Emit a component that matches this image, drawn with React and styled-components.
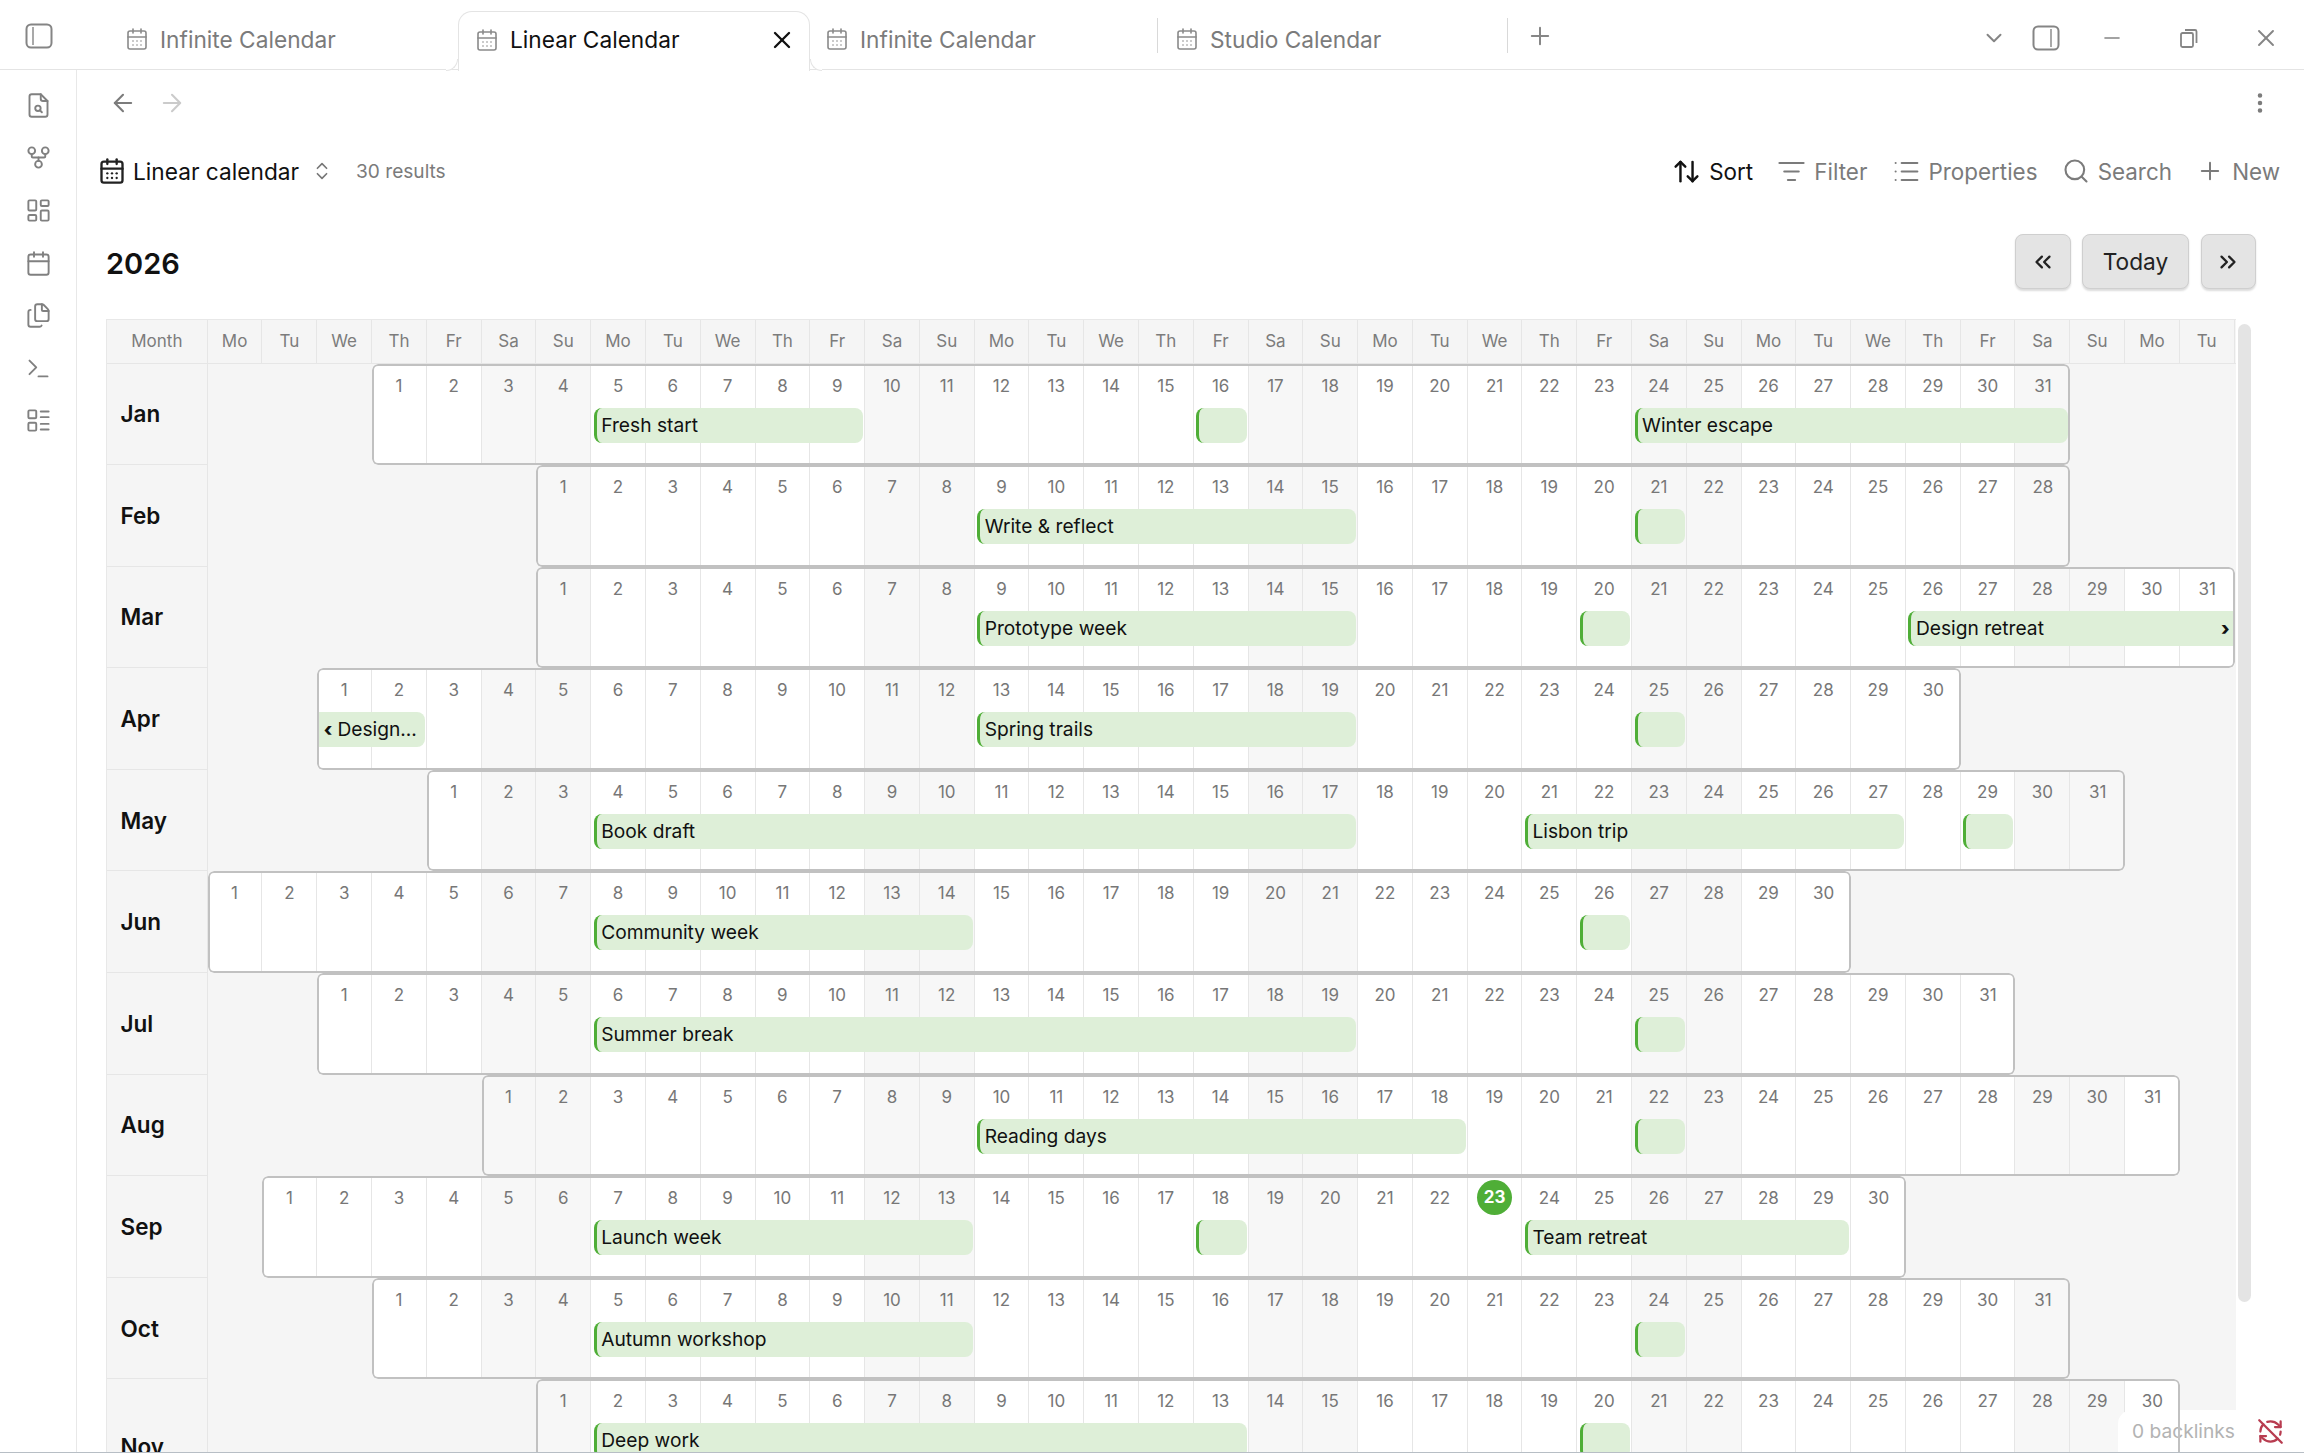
import React from 'react';
import styled, { createGlobalStyle } from 'styled-components';
import {
  ArrowLeft,
  ArrowRight,
  ArrowUpDown,
  Calendar,
  CalendarDays,
  ChevronDown,
  ChevronsLeft,
  ChevronsRight,
  ChevronsUpDown,
  EllipsisVertical,
  Files,
  GitFork,
  LayoutDashboard,
  LayoutList,
  List,
  ListFilter,
  Minus,
  Plus,
  RefreshCwOff,
  Search,
  Terminal,
  X,
} from 'lucide-react';

const GlobalStyle = createGlobalStyle`
  html, body {
    margin: 0;
    padding: 0;
    overflow: hidden;
    background: #fff;
  }
  body {
    font-family: Inter, "Liberation Sans", sans-serif;
  }
`;

const DAY_NAMES = ['Mo', 'Tu', 'We', 'Th', 'Fr', 'Sa', 'Su'];
const TODAY = { month: 'Sep', day: 23 };

const months = [
  {
    name: 'Jan',
    offset: 3,
    days: 31,
    events: [
      { from: 5, to: 9, label: 'Fresh start' },
      { from: 16, to: 16 },
      { from: 24, to: 31, label: 'Winter escape' },
    ],
  },
  {
    name: 'Feb',
    offset: 6,
    days: 28,
    events: [
      { from: 9, to: 15, label: 'Write & reflect' },
      { from: 21, to: 21 },
    ],
  },
  {
    name: 'Mar',
    offset: 6,
    days: 31,
    events: [
      { from: 9, to: 15, label: 'Prototype week' },
      { from: 20, to: 20 },
      { from: 26, to: 31, label: 'Design retreat', continues: 'right' },
    ],
  },
  {
    name: 'Apr',
    offset: 2,
    days: 30,
    events: [
      { from: 1, to: 2, label: 'Design...', continues: 'left' },
      { from: 13, to: 19, label: 'Spring trails' },
      { from: 25, to: 25 },
    ],
  },
  {
    name: 'May',
    offset: 4,
    days: 31,
    events: [
      { from: 4, to: 17, label: 'Book draft' },
      { from: 21, to: 27, label: 'Lisbon trip' },
      { from: 29, to: 29 },
    ],
  },
  {
    name: 'Jun',
    offset: 0,
    days: 30,
    events: [
      { from: 8, to: 14, label: 'Community week' },
      { from: 26, to: 26 },
    ],
  },
  {
    name: 'Jul',
    offset: 2,
    days: 31,
    events: [
      { from: 6, to: 19, label: 'Summer break' },
      { from: 25, to: 25 },
    ],
  },
  {
    name: 'Aug',
    offset: 5,
    days: 31,
    events: [
      { from: 10, to: 18, label: 'Reading days' },
      { from: 22, to: 22 },
    ],
  },
  {
    name: 'Sep',
    offset: 1,
    days: 30,
    events: [
      { from: 7, to: 13, label: 'Launch week' },
      { from: 18, to: 18 },
      { from: 24, to: 29, label: 'Team retreat' },
    ],
  },
  {
    name: 'Oct',
    offset: 3,
    days: 31,
    events: [
      { from: 5, to: 11, label: 'Autumn workshop' },
      { from: 24, to: 24 },
    ],
  },
  {
    name: 'Nov',
    offset: 6,
    days: 30,
    tall: true,
    events: [
      { from: 2, to: 13, label: 'Deep work' },
      { from: 20, to: 20 },
    ],
  },
];

const Window = styled.div`
  width: 2304px;
  height: 1453px;
  box-sizing: border-box;
  border-bottom: 1px solid #b7bec5;
  display: flex;
  flex-direction: column;
  overflow: hidden;
  background: #fff;
`;

const TabBar = styled.header`
  height: 70px;
  flex: none;
  box-sizing: border-box;
  display: flex;
  align-items: flex-end;
  border-bottom: 1.5px solid #e4e4e4;
`;

const SidebarToggle = styled.button`
  width: 108px;
  height: 60px;
  flex: none;
  padding: 0 0 6px 25px;
  box-sizing: border-box;
  border: 0;
  background: none;
  display: flex;
  align-items: center;
  svg {
    display: block;
  }
`;

const Tab = styled.div`
  position: relative;
  width: ${p => (p.$active ? '352px' : '350px')};
  height: ${p => (p.$active ? '60px' : '58px')};
  flex: none;
  box-sizing: border-box;
  margin-bottom: ${p => (p.$active ? '-1.5px' : '0')};
  margin-right: ${p => (p.$active ? '-2px' : '0')};
  padding: 0 13px ${p => (p.$active ? '3px' : '2px')} ${p => (p.$active ? '16px' : '17px')};
  display: flex;
  align-items: center;
  gap: 11px;
  font-size: 22.7px;
  color: ${p => (p.$active ? '#111' : '#7b7b7b')};
  background: #fff;
  ${p =>
    p.$active &&
    `
    border: 1.5px solid #e4e4e4;
    border-bottom: 0;
    border-radius: 14px 14px 0 0;
    z-index: 1;
    &::before, &::after {
      content: '';
      position: absolute;
      bottom: 0;
      width: 12px;
      height: 12px;
      box-sizing: border-box;
      border-bottom: 1.5px solid #e4e4e4;
      background: #fff;
    }
    &::before {
      left: -13px;
      border-right: 1.5px solid #e4e4e4;
      border-bottom-right-radius: 12px;
    }
    &::after {
      right: -13px;
      border-left: 1.5px solid #e4e4e4;
      border-bottom-left-radius: 12px;
    }
  `}
  ${p =>
    p.$divider &&
    `
    &::after {
      content: '';
      position: absolute;
      right: 0;
      top: 7px;
      height: 35px;
      width: 1px;
      background: #d9d9d9;
    }
  `}
`;

const TabTitle = styled.span`
  flex: 1;
  white-space: nowrap;
`;

const TabIcon = styled(CalendarDays)`
  flex: none;
  color: #8a8a8a;
`;

const AddTab = styled.button`
  width: 64px;
  height: 58px;
  flex: none;
  padding: 0 0 8px;
  box-sizing: border-box;
  border: 0;
  background: none;
  color: #868686;
  display: flex;
  align-items: center;
  justify-content: center;
`;

const TitleActions = styled.div`
  margin-left: auto;
  height: 58px;
  display: flex;
  align-items: center;
  color: #858585;
`;

const TitleAction = styled.button`
  width: ${p => p.$w}px;
  margin-right: ${p => p.$mr || 0}px;
  height: 58px;
  flex: none;
  padding: 0 0 4px;
  box-sizing: border-box;
  border: 0;
  background: none;
  color: inherit;
  display: flex;
  align-items: center;
  justify-content: center;
`;

const Body = styled.div`
  flex: 1;
  min-height: 0;
  display: flex;
`;

const Sidebar = styled.nav`
  width: 77px;
  flex: none;
  box-sizing: border-box;
  padding-top: 9px;
  border-right: 1.5px solid #e8e8e8;
  display: flex;
  flex-direction: column;
  align-items: center;
  color: #808080;
`;

const SideItem = styled.div`
  height: 52.6px;
  flex: none;
  display: flex;
  align-items: center;
  justify-content: center;
`;

const Main = styled.main`
  position: relative;
  flex: 1;
  min-width: 0;
  overflow: hidden;
  display: flex;
  flex-direction: column;
`;

const NavBar = styled.div`
  height: 66px;
  flex: none;
  box-sizing: border-box;
  padding: 0 31px 0 32px;
  display: flex;
  align-items: center;
  gap: 21px;
  color: #7c7c7c;
`;

const NavSpacer = styled.div`
  flex: 1;
`;

const ForwardArrow = styled(ArrowRight)`
  color: #cbcbcb;
`;

const Toolbar = styled.div`
  height: 70px;
  flex: none;
  box-sizing: border-box;
  padding: 0 24px 0 21px;
  display: flex;
  align-items: center;
  justify-content: space-between;
`;

const ViewPicker = styled.div`
  display: flex;
  align-items: center;
  font-size: 22.7px;
  color: #111;
`;

const ViewName = styled.span`
  margin-left: 7px;
  margin-right: 12px;
  white-space: nowrap;
`;

const ResultCount = styled.span`
  margin-left: 23px;
  font-size: 19.1px;
  color: #7b7b7b;
  white-space: nowrap;
`;

const UpDownIcon = styled(ChevronsUpDown)`
  color: #777;
`;

const ToolActions = styled.div`
  display: flex;
  align-items: center;
  gap: 24.2px;
`;

const ToolAction = styled.button`
  padding: 0;
  border: 0;
  background: none;
  display: flex;
  align-items: center;
  gap: 8px;
  font: inherit;
  font-size: 22.4px;
  color: ${p => (p.$active ? '#111' : '#7b7b7b')};
  white-space: nowrap;
`;

const YearBar = styled.div`
  height: 55px;
  flex: none;
  margin: 28px 0 30px;
  padding: 0 48px 0 29px;
  display: flex;
  align-items: center;
  gap: 11.5px;
`;

const Year = styled.h2`
  flex: 1;
  margin: 3px 0 0;
  font-size: 29px;
  font-weight: 600;
  color: #111;
`;

const NavButton = styled.button`
  height: 55px;
  width: ${p => p.$w}px;
  flex: none;
  box-sizing: border-box;
  padding: 0;
  border: 1.5px solid #cfcfcf;
  border-radius: 8px;
  background: #e4e4e4;
  box-shadow: 0 1.5px 2px rgba(0, 0, 0, 0.14);
  font: inherit;
  font-size: 22.7px;
  color: #222;
  display: flex;
  align-items: center;
  justify-content: center;
`;

const CalendarGrid = styled.section`
  margin-left: 29px;
  flex: none;
  width: 2129.5px;
  box-sizing: border-box;
  border-top: 1px solid #e8e8e8;
  border-left: 1px solid #e8e8e8;
  background: #f5f5f5;
`;

const gridColumns = `
  display: grid;
  grid-template-columns: 100.7px repeat(37, 54.79px);
`;

const HeaderRow = styled.div`
  ${gridColumns}
  height: 42.5px;
  border-bottom: 1.5px solid #e6e6e6;
`;

const HeaderCell = styled.div`
  border-right: 1px solid #e6e6e6;
  font-size: 17px;
  color: #7c7c7c;
  display: flex;
  align-items: center;
  justify-content: center;
`;

const MonthRow = styled.div`
  ${gridColumns}
  height: ${p => (p.$tall ? '135px' : '101.6px')};
  box-sizing: border-box;
`;

const MonthLabel = styled.div`
  grid-column: 1;
  box-sizing: border-box;
  padding: 0 0 0 13.5px;
  border-right: 1px solid #e6e6e6;
  border-bottom: 1px solid #e6e6e6;
  font-size: 22.5px;
  font-weight: 600;
  color: #111;
  display: flex;
  align-items: center;
`;

const MonthBox = styled.div`
  position: relative;
  grid-column: ${p => p.$offset + 2} / span ${p => p.$days};
  border-radius: 6px;
  background: #fff;
  display: grid;
  grid-template-columns: subgrid;
  grid-template-rows: 1fr;
  overflow: hidden;
  &::after {
    content: '';
    position: absolute;
    inset: 0;
    z-index: 2;
    border: 2px solid #c1c1c1;
    border-radius: 6px;
    pointer-events: none;
  }
`;

const DayCell = styled.div`
  grid-row: 1;
  grid-column: ${p => p.$day};
  box-sizing: border-box;
  padding-top: 4px;
  border-right: ${p => (p.$last ? '0' : '1px solid #e6e6e6')};
  background: ${p => (p.$weekend ? '#f7f7f7' : '#fff')};
`;

const DayNumber = styled.div`
  width: 35px;
  height: 35px;
  margin: 0 auto;
  border-radius: 50%;
  font-size: 17px;
  font-weight: ${p => (p.$today ? 700 : 400)};
  line-height: ${p => (p.$today ? '35px' : '36.5px')};
  text-align: center;
  color: ${p => (p.$today ? '#fff' : '#777')};
  background: ${p => (p.$today ? '#4fae37' : 'transparent')};
`;

const EventBar = styled.div`
  grid-row: 1;
  grid-column: ${p => p.$start} / span ${p => p.$span};
  align-self: start;
  z-index: 1;
  height: 35px;
  margin: 44px ${p => (p.$continues === 'right' ? '0' : '2px')} 0
    ${p => (p.$continues === 'left' ? '0' : '2.5px')};
  box-sizing: border-box;
  padding: 0 6px 0 4.5px;
  border-left: ${p => (p.$continues === 'left' ? '0' : '3px solid #4fae37')};
  border-radius: ${p =>
    p.$continues === 'left'
      ? '0 8px 8px 0'
      : p.$continues === 'right'
      ? '8px 0 0 8px'
      : '8px'};
  background: #deefd8;
  font-size: 19.2px;
  line-height: 35px;
  color: #111;
  white-space: nowrap;
  overflow: hidden;
  display: flex;
  justify-content: ${p => (p.$continues === 'right' ? 'space-between' : 'flex-start')};
`;

const EventArrow = styled.span`
  font-weight: 800;
  margin: 0 ${p => (p.$left ? '5px' : '-1px')} 0 ${p => (p.$left ? '2px' : '0')};
`;

const ScrollThumb = styled.div`
  position: absolute;
  top: 254px;
  right: 53px;
  width: 13px;
  height: 978px;
  border-radius: 7px;
  background: #e4e4e4;
`;

const Backlinks = styled.div`
  position: absolute;
  right: 0;
  bottom: 0;
  width: 186px;
  height: 42px;
  box-sizing: border-box;
  padding-left: 14px;
  border-top-left-radius: 14px;
  background: #fff;
  display: flex;
  align-items: center;
  gap: 22px;
  font-size: 19.2px;
  color: #b3b3b3;
  white-space: nowrap;
`;

const BacklinkIcon = styled(RefreshCwOff)`
  flex: none;
  color: #b83c50;
`;

function PanelIcon({ side }) {
  const x = side === 'left' ? 8 : 19;
  return (
    <svg width="28" height="26" viewBox="0 0 28 26" fill="none" stroke="#858585" strokeWidth="2">
      <rect x="1.5" y="1.5" width="25" height="23" rx="4.5" />
      <line x1={x} y1="4" x2={x} y2="22" strokeWidth="1.4" />
    </svg>
  );
}

function RestoreIcon() {
  return (
    <svg width="20" height="22" viewBox="0 0 20 22" fill="none" stroke="#858585" strokeWidth="1.8">
      <rect x="2" y="6" width="12" height="14" rx="1.5" />
      <path d="M6 3h10a1.5 1.5 0 0 1 1.5 1.5V16" />
    </svg>
  );
}

function FileSearchIcon() {
  return (
    <svg width="27" height="27" viewBox="0 0 24 24" fill="none" stroke="currentColor" strokeWidth="1.7" strokeLinecap="round" strokeLinejoin="round">
      <path d="M14 2H6a2 2 0 0 0-2 2v16a2 2 0 0 0 2 2h12a2 2 0 0 0 2-2V8z" />
      <path d="M14 2v4a2 2 0 0 0 2 2h4" />
      <circle cx="11.5" cy="14.5" r="2.4" />
      <path d="m13.4 16.4 1.6 1.6" />
    </svg>
  );
}

function Month({ month }) {
  const { name, offset, days, events, tall } = month;
  return (
    <MonthRow $tall={tall}>
      <MonthLabel>{name}</MonthLabel>
      <MonthBox $offset={offset} $days={days}>
        {Array.from({ length: days }, (_, i) => {
          const day = i + 1;
          return (
            <DayCell key={day} $day={day} $weekend={(offset + i) % 7 >= 5} $last={day === days}>
              <DayNumber $today={TODAY.month === name && TODAY.day === day}>{day}</DayNumber>
            </DayCell>
          );
        })}
        {events.map(event => (
          <EventBar
            key={event.from}
            $start={event.from}
            $span={event.to - event.from + 1}
            $continues={event.continues}
          >
            {event.continues === 'left' && <EventArrow $left>‹</EventArrow>}
            {event.label}
            {event.continues === 'right' && <EventArrow>›</EventArrow>}
          </EventBar>
        ))}
      </MonthBox>
    </MonthRow>
  );
}

export default function App() {
  return (
    <Window>
      <GlobalStyle />
      <TabBar>
        <SidebarToggle>
          <PanelIcon side="left" />
        </SidebarToggle>
        <Tab>
          <TabIcon size={24} strokeWidth={1.6} />
          <TabTitle>Infinite Calendar</TabTitle>
        </Tab>
        <Tab $active>
          <TabIcon size={24} strokeWidth={1.6} />
          <TabTitle>Linear Calendar</TabTitle>
          <X size={28} strokeWidth={2} color="#111" />
        </Tab>
        <Tab $divider>
          <TabIcon size={24} strokeWidth={1.6} />
          <TabTitle>Infinite Calendar</TabTitle>
        </Tab>
        <Tab $divider>
          <TabIcon size={24} strokeWidth={1.6} />
          <TabTitle>Studio Calendar</TabTitle>
        </Tab>
        <AddTab>
          <Plus size={28} strokeWidth={1.7} />
        </AddTab>
        <TitleActions>
          <TitleAction $w={52}>
            <ChevronDown size={26} strokeWidth={1.8} />
          </TitleAction>
          <TitleAction $w={51} $mr={2}>
            <PanelIcon side="right" />
          </TitleAction>
          <TitleAction $w={77}>
            <Minus size={24} strokeWidth={1.6} />
          </TitleAction>
          <TitleAction $w={77}>
            <RestoreIcon />
          </TitleAction>
          <TitleAction $w={77}>
            <X size={28} strokeWidth={1.6} />
          </TitleAction>
        </TitleActions>
      </TabBar>
      <Body>
        <Sidebar>
          <SideItem>
            <FileSearchIcon />
          </SideItem>
          <SideItem>
            <GitFork size={27} strokeWidth={1.7} />
          </SideItem>
          <SideItem>
            <LayoutDashboard size={27} strokeWidth={1.7} />
          </SideItem>
          <SideItem>
            <Calendar size={27} strokeWidth={1.7} />
          </SideItem>
          <SideItem>
            <Files size={27} strokeWidth={1.7} />
          </SideItem>
          <SideItem>
            <Terminal size={27} strokeWidth={1.7} />
          </SideItem>
          <SideItem>
            <LayoutList size={27} strokeWidth={1.7} />
          </SideItem>
        </Sidebar>
        <Main>
          <NavBar>
            <ArrowLeft size={28} strokeWidth={1.8} />
            <ForwardArrow size={28} strokeWidth={1.8} />
            <NavSpacer />
            <EllipsisVertical size={26} strokeWidth={2.2} />
          </NavBar>
          <Toolbar>
            <ViewPicker>
              <CalendarDays size={28} strokeWidth={2} color="#222" />
              <ViewName>Linear calendar</ViewName>
              <UpDownIcon size={22} strokeWidth={1.8} />
              <ResultCount>30 results</ResultCount>
            </ViewPicker>
            <ToolActions>
              <ToolAction $active>
                <ArrowUpDown size={29} strokeWidth={2} />
                Sort
              </ToolAction>
              <ToolAction>
                <ListFilter size={29} strokeWidth={1.7} />
                Filter
              </ToolAction>
              <ToolAction>
                <List size={29} strokeWidth={1.7} />
                Properties
              </ToolAction>
              <ToolAction>
                <Search size={28} strokeWidth={1.8} />
                Search
              </ToolAction>
              <ToolAction>
                <Plus size={28} strokeWidth={1.7} />
                New
              </ToolAction>
            </ToolActions>
          </Toolbar>
          <YearBar>
            <Year>2026</Year>
            <NavButton $w={55.5}>
              <ChevronsLeft size={26} strokeWidth={2.1} />
            </NavButton>
            <NavButton $w={107}>Today</NavButton>
            <NavButton $w={55.5}>
              <ChevronsRight size={26} strokeWidth={2.1} />
            </NavButton>
          </YearBar>
          <CalendarGrid>
            <HeaderRow>
              <HeaderCell>Month</HeaderCell>
              {Array.from({ length: 37 }, (_, i) => (
                <HeaderCell key={i}>{DAY_NAMES[i % 7]}</HeaderCell>
              ))}
            </HeaderRow>
            {months.map(month => (
              <Month key={month.name} month={month} />
            ))}
          </CalendarGrid>
          <ScrollThumb />
          <Backlinks>
            0 backlinks
            <BacklinkIcon size={27} strokeWidth={2} />
          </Backlinks>
        </Main>
      </Body>
    </Window>
  );
}
